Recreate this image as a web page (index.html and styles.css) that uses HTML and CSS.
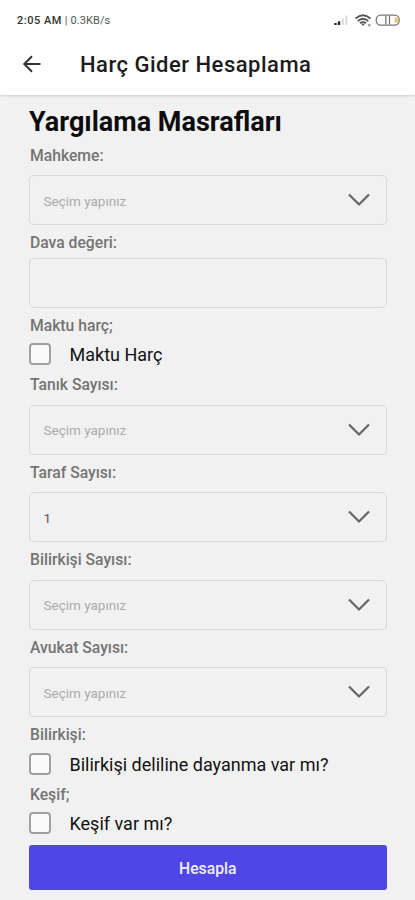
FILE: index.html
```html
<!DOCTYPE html>
<html lang="tr">
<head>
<meta charset="utf-8">
<title>Harç Gider Hesaplama</title>
<link rel="stylesheet" href="styles.css">
</head>
<body>
<header class="top">
  <div class="status">
    <div class="clock"><span class="time">2:05 AM</span><span class="rate">| 0.3KB/s</span></div>
    <svg class="indicators" width="68" height="16" viewBox="0 0 68 16">
      <path d="M2.500 12v-2" stroke="#222" stroke-width="2.400"/>
      <path d="M6 12V8.300" stroke="#222" stroke-width="2.400"/>
      <path d="M9.800 12V5.500M13.300 12V2.500" stroke="#dcdcdc" stroke-width="2.200"/>
      <g fill="none" stroke="#555" stroke-width="1.800">
        <path d="M22.500 5.500Q30 -1 37.500 5.500M24.800 8Q30 3.500 35.200 8M27 10.200Q30 7.600 33 10.200"/>
      </g>
      <path d="M28 10.500h4L30 13z" fill="#555"/>
      <circle cx="36.200" cy="12.300" r="1.300" fill="#999"/>
      <rect x="43.200" y="2.200" width="23" height="10" rx="4.600" fill="#fff" stroke="#777" stroke-width="1.300"/>
      <path d="M52.800 3v8.500M56.500 3v8.500" stroke="#777" stroke-width="1.300"/>
      <path d="M61.700 4.300h1.500q1.800 0 1.800 1.800v2.200q0 1.800-1.800 1.800h-1.500z" fill="#f3c47c"/>
    </svg>
  </div>
  <div class="bar">
    <svg class="back" width="20" height="20" viewBox="0 0 20 20"><path d="M18.500 10H2.500M10 2.200L2.300 10l7.700 7.800" fill="none" stroke="#333" stroke-width="2"/></svg>
    <h1>Harç Gider Hesaplama</h1>
  </div>
</header>
<main>
  <h2>Yargılama Masrafları</h2>
  <div class="label">Mahkeme:</div>
  <div class="field"><span>Seçim yapınız</span><svg class="chev" viewBox="0 0 22 14"><path d="M1 1.500l10 10 10-10"/></svg></div>
  <div class="label tight">Dava değeri:</div>
  <div class="field"></div>
  <div class="label check-label">Maktu harç;</div>
  <div class="check"><i class="box"></i><span>Maktu Harç</span></div>
  <div class="label after-check">Tanık Sayısı:</div>
  <div class="field"><span>Seçim yapınız</span><svg class="chev" viewBox="0 0 22 14"><path d="M1 1.500l10 10 10-10"/></svg></div>
  <div class="label">Taraf Sayısı:</div>
  <div class="field chosen"><span>1</span><svg class="chev" viewBox="0 0 22 14"><path d="M1 1.500l10 10 10-10"/></svg></div>
  <div class="label">Bilirkişi Sayısı:</div>
  <div class="field"><span>Seçim yapınız</span><svg class="chev" viewBox="0 0 22 14"><path d="M1 1.500l10 10 10-10"/></svg></div>
  <div class="label">Avukat Sayısı:</div>
  <div class="field"><span>Seçim yapınız</span><svg class="chev" viewBox="0 0 22 14"><path d="M1 1.500l10 10 10-10"/></svg></div>
  <div class="label check-label">Bilirkişi:</div>
  <div class="check"><i class="box"></i><span>Bilirkişi deliline dayanma var mı?</span></div>
  <div class="label after-check check-label">Keşif;</div>
  <div class="check"><i class="box"></i><span>Keşif var mı?</span></div>
  <button class="submit">Hesapla</button>
</main>
</body>
</html>
```
FILE: styles.css
```css
* { box-sizing: border-box; }
body {
  margin: 0;
  height: 900px;
  overflow: hidden;
  background: #f1f1f1;
  font-family: Roboto, "Liberation Sans", sans-serif;
  color: #111;
}
.top {
  height: 95px;
  background: #fff;
  box-shadow: 0 1px 2px rgba(0, 0, 0, .15);
}
.status {
  display: flex;
  justify-content: space-between;
  height: 40px;
  padding: 13px 14px 0 17px;
}
.clock { display: flex; gap: 3px; font-size: 11px; line-height: 16px; color: #333; }
.time { font-weight: 500; letter-spacing: .5px; }
.rate { color: #555; letter-spacing: .1px; }
.bar { display: flex; align-items: center; height: 48px; padding-left: 22px; }
.back { flex: none; }
h1 { margin: 2px 0 0 38px; font-size: 22px; font-weight: 500; line-height: 28px; letter-spacing: .5px; color: #1c1c1c; white-space: nowrap; }
main { padding: 11px 28.500px 0 29px; }
h2 { margin: 0; font-size: 27px; line-height: 32px; font-weight: 700; color: #0c0c0c; white-space: nowrap; }
.label {
  height: 20px;
  margin: 8px 0 9.500px;
  padding-left: 1px;
  font-size: 15.700px;
  line-height: 20px;
  font-weight: 500;
  color: #747474;
  white-space: nowrap;
}
h2 + .label { margin-top: 7.500px; }
.tight { margin-bottom: 4.500px; }
.check-label { margin-bottom: 7.800px; }
.after-check { margin-top: 10px; }
.after-check.check-label { margin: 9.500px 0 7.500px; }
.field {
  display: flex;
  align-items: center;
  justify-content: space-between;
  height: 50px;
  padding: 0 16px 0 13.500px;
  border: 1px solid #dadada;
  border-radius: 4px;
  font-size: 13.500px;
  color: #ababab;
}
.field span { padding-top: 1px; }
.chosen { color: #555; }
.chev { width: 22px; height: 14px; fill: none; stroke: #666; stroke-width: 2.200; }
.check { display: flex; align-items: center; gap: 18.500px; height: 22px; font-size: 18px; line-height: 22px; white-space: nowrap; }
.check span { padding-top: 2px; }
.box { flex: none; width: 22px; height: 22px; border: 2px solid #a0a0a0; border-radius: 4px; background: #fafafa; }
.submit {
  display: block;
  width: 100%;
  height: 45px;
  margin-top: 11px;
  padding: 2px 0 0;
  border: 0;
  border-radius: 3px;
  background: #4f46e5;
  color: #f0f0ff;
  font: 500 15.700px Roboto, "Liberation Sans", sans-serif;
}
```
